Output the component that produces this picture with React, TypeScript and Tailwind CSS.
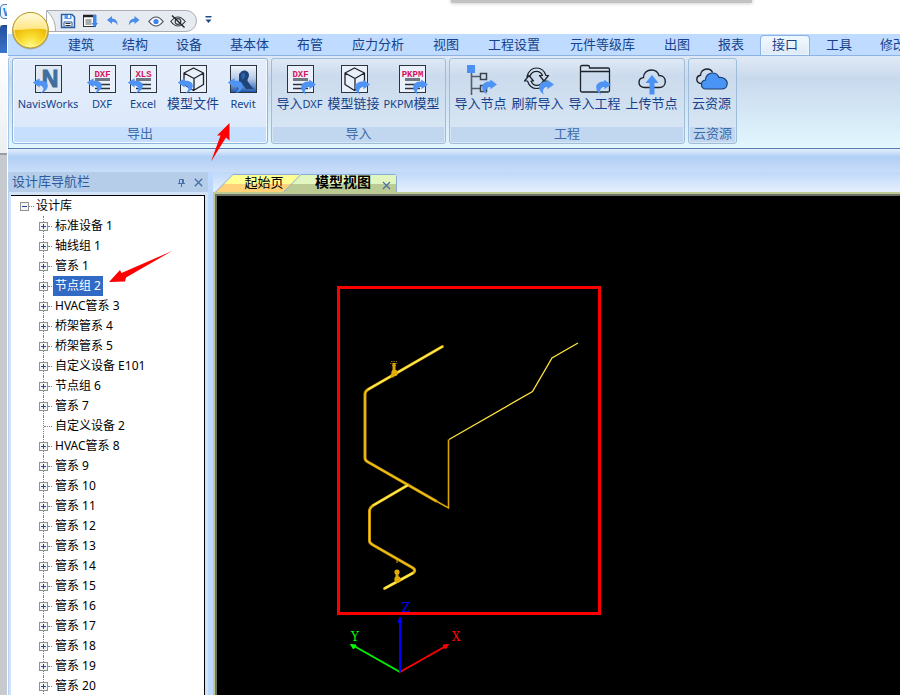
import { useState } from "react";
import type { ReactNode } from "react";
import clsx from "clsx";

type RibbonTab = { label: string; width: string };

const ribbonTabs: RibbonTab[] = [
  { label: "建筑", width: "w-[50px]" },
  { label: "结构", width: "w-[50px]" },
  { label: "设备", width: "w-[50px]" },
  { label: "基本体", width: "w-[63px]" },
  { label: "布管", width: "w-[50px]" },
  { label: "应力分析", width: "w-[78px]" },
  { label: "视图", width: "w-[50px]" },
  { label: "工程设置", width: "w-[78px]" },
  { label: "元件等级库", width: "w-[91px]" },
  { label: "出图", width: "w-[50px]" },
  { label: "报表", width: "w-[50px]" },
  { label: "接口", width: "w-[50px]" },
  { label: "工具", width: "w-[50px]" },
  { label: "修改", width: "w-[50px]" },
];

const treeItems = [
  "标准设备 1",
  "轴线组 1",
  "管系 1",
  "节点组 2",
  "HVAC管系 3",
  "桥架管系 4",
  "桥架管系 5",
  "自定义设备 E101",
  "节点组 6",
  "管系 7",
  "自定义设备 2",
  "HVAC管系 8",
  "管系 9",
  "管系 10",
  "管系 11",
  "管系 12",
  "管系 13",
  "管系 14",
  "管系 15",
  "管系 16",
  "管系 17",
  "管系 18",
  "管系 19",
  "管系 20",
];

const leafItems = ["自定义设备 2"];

/* ---------- ribbon icons ---------- */

function IconBox({ children }: { children: ReactNode }) {
  return (
    <svg viewBox="0 0 32 32" className="h-8 w-8 shrink-0" fill="none" aria-hidden="true">
      {children}
    </svg>
  );
}

function Frame({ fill = "#e9f0fa" }: { fill?: string }) {
  return <rect x="3.5" y="1.5" width="26" height="27" fill={fill} stroke="#2b333f" />;
}

function ExportArrow() {
  return (
    <path
      d="M0.8 18.6 7.6 14.2V16.8C12.6 16.6 15.8 18.4 15.8 21.6 15.8 25.4 12.4 28.4 8 29.6 10.8 27.4 11.8 25.6 11.2 23.8 10.8 22.4 9.6 21.6 7.6 21.4V23.6Z"
      fill="#4f94f5"
    />
  );
}

function ImportArrow() {
  return (
    <path
      d="M32 20.4 25.2 15.6V17.6C20.4 17.6 17.4 19.6 17.2 23 17 26 18.8 28.6 22 30.4 20.6 27.8 20.8 25.8 22 24.4 22.8 23.4 24 23 25.4 23V25.2Z"
      fill="#4f94f5"
    />
  );
}

function FileIcon({ name, incoming }: { name: string; incoming?: boolean }) {
  return (
    <IconBox>
      <Frame />
      <text
        x="16.5"
        y="12.5"
        textAnchor="middle"
        fill="#d8125c"
        fontSize="9"
        fontWeight="700"
        fontFamily="'Liberation Mono', monospace"
      >
        {name}
      </text>
      <path d="M9 15.5h15" stroke="#707783" strokeWidth="3" />
      <path d="M9 20.5h15M9 24.5h15" stroke="#2b333f" strokeWidth="1.4" />
      {incoming ? <ImportArrow /> : <ExportArrow />}
    </IconBox>
  );
}

function CubeIcon({ incoming }: { incoming?: boolean }) {
  return (
    <IconBox>
      <Frame />
      <path
        d="M16.5 4 26.5 9V20.5L16.5 26.5 7 20.5V9ZM7 9 17 14.5 26.5 9M17 14.5V26"
        stroke="#1d2229"
        strokeWidth="1.3"
        strokeLinejoin="round"
      />
      {incoming ? <ImportArrow /> : <ExportArrow />}
    </IconBox>
  );
}

function NavisIcon() {
  return (
    <IconBox>
      <Frame fill="#dfe9f4" />
      <text
        x="18"
        y="23"
        textAnchor="middle"
        fill="#3f6f9f"
        stroke="#3f6f9f"
        fontSize="23"
        fontWeight="700"
        fontFamily="'Liberation Sans', sans-serif"
      >
        N
      </text>
      <ExportArrow />
    </IconBox>
  );
}

function RevitIcon() {
  return (
    <IconBox>
      <defs>
        <linearGradient id="revit-bg" x1="0" y1="0" x2="0" y2="1">
          <stop offset="0" stopColor="#f3f7fc" />
          <stop offset="0.5" stopColor="#b4c9e8" />
          <stop offset="1" stopColor="#1d55ae" />
        </linearGradient>
      </defs>
      <Frame fill="url(#revit-bg)" />
      <path
        d="M12 10 15 7C18 5.5 22 7 22 11 22 14 20 15.500 20.500 17L24 22 27 25H19L16 21 14 25H10L12 20Z"
        fill="#1f4479"
      />
      <path d="M14 10.500 17 8.500 18.500 12 15.500 16Z" fill="#2f62a8" />
      <ExportArrow />
    </IconBox>
  );
}

function NodesIcon() {
  return (
    <IconBox>
      <path d="M6.5 9V31M6.5 12.5H15M6.5 24.5H15" stroke="#555d68" strokeWidth="1.6" />
      <rect x="15.5" y="9.5" width="6" height="6" stroke="#3a424d" strokeWidth="1.5" />
      <rect x="15.5" y="21.5" width="6" height="6" stroke="#3a424d" strokeWidth="1.5" />
      <rect x="2" y="1" width="8" height="8" fill="#4a90f5" />
      <ImportArrow />
    </IconBox>
  );
}

function RefreshIcon() {
  return (
    <IconBox>
      <g stroke="#1d2229" strokeWidth="1.2" strokeLinejoin="round">
        <path d="M5 12.500C6.500 7.500 10 4 14.500 4 19 4 22.500 7 24 11.500H26.500L22 17 17.500 11.500H20.500C19.500 9 17.500 7.300 14.500 7.300 11.500 7.300 9 9.500 8 12Z" />
        <path d="M24.500 17C23 21.500 19 24.500 14.500 24.500 10 24.500 7 21.500 5.500 17H2.500L7 11.500 11.500 17H9C10 19.500 12 21.300 14.500 21.300 17.500 21.300 20 19.500 21 17Z" />
      </g>
      <ImportArrow />
    </IconBox>
  );
}

function FolderIcon() {
  return (
    <IconBox>
      <path
        d="M1.5 26.5V3Q1.5 1.5 3 1.5H9Q10.5 1.5 10.5 3V4H29Q30.5 4 30.5 5.5V26.5Q30.5 28 29 28H3Q1.5 28 1.5 26.5ZM1.5 7.5H30.5"
        stroke="#1d2229"
        strokeWidth="1.3"
      />
      <ImportArrow />
    </IconBox>
  );
}

function UploadIcon() {
  return (
    <IconBox>
      <path
        d="M8.5 23.5C5 23.5 3 21.2 3 18.5 3 15.8 5 13.8 7.5 13.6 7.5 9 11 6 15.5 6 19.5 6 22 8.2 23 11.5 27 11.5 29.3 14.2 29.3 17.5 29.3 21 26.8 23.5 23.5 23.5Z"
        stroke="#1d2229"
        strokeWidth="1.4"
      />
      <path d="M16 11 22.5 19H18.5V30.5H13.5V19H9.5Z" fill="#4a90f5" />
    </IconBox>
  );
}

function CloudIcon() {
  return (
    <IconBox>
      <path
        d="M7 19.5C2.5 20 0.8 17.5 0.8 15.5 0.8 13 2.5 11.5 4.5 11.2 4.5 7.5 7.5 5 11 5 14 5 15.8 6.5 16.5 8.5"
        stroke="#1d2229"
        strokeWidth="1.4"
      />
      <path
        d="M10 25C7 25 5.5 23 5.5 20.5 5.5 18 7.2 16.3 9.5 16 9.5 12 12.5 9 16.5 9 19.8 9 22 10.8 23 13.5 28 13 31.2 16 31.2 19.5 31.2 22.8 28.8 25 26 25Z"
        fill="#4a94f5"
        stroke="#1c3f73"
        strokeWidth="1.2"
      />
    </IconBox>
  );
}

/* ---------- quick access ---------- */

const quickActions: { name: string; icon: ReactNode }[] = [
  {
    name: "保存",
    icon: (
      <>
        <path d="M1.5 1.5H12L14.5 4V14.5H1.5Z" fill="#eef5ff" stroke="#2d5fa8" strokeWidth="1.5" />
        <path d="M4.500 2h7v4h-7z" fill="#5a9af0" />
        <path d="M4 9h8v5H4z" fill="#fff" stroke="#2f5d9c" />
        <path d="M5.5 10.5h5M5.5 12.5h5" stroke="#333" />
        <rect x="8" y="2" width="2" height="3" fill="#fff" />
      </>
    ),
  },
  {
    name: "窗口",
    icon: (
      <>
        <rect x="1.5" y="2.5" width="12" height="11" fill="#fff" stroke="#333" />
        <path d="M1 3h13" stroke="#222" strokeWidth="2.5" />
        <path d="M3.5 7h6M3.5 9h6M3.5 11h6" stroke="#555" />
        <path d="M11 2h3.5v8H16l-3.2 4.5L9.5 10H11z" fill="#3f87ea" />
      </>
    ),
  },
  {
    name: "撤销",
    icon: <path d="M3 7 8 3V5.4C12 5.6 14 8.5 13.5 12.5 12.4 10 11 8.8 8 8.8V11Z" fill="#4a8cec" />,
  },
  {
    name: "重做",
    icon: <path d="M13.5 7 8.5 3V5.4C4.5 5.6 2.5 8.5 3 12.5 4.1 10 5.5 8.8 8.5 8.8V11Z" fill="#4a8cec" />,
  },
  {
    name: "显示",
    icon: (
      <>
        <path d="M0.8 8.5Q8 -0.5 15.2 8.5Q8 17.5 0.8 8.5Z" fill="#f5f8fc" stroke="#444b55" strokeWidth="1.2" />
        <circle cx="8" cy="8.5" r="2.6" fill="#3f83e8" />
      </>
    ),
  },
  {
    name: "隐藏",
    icon: (
      <>
        <path d="M0.8 8.5Q8 -0.5 15.2 8.5Q8 17.5 0.8 8.5Z" stroke="#333a44" strokeWidth="1.2" />
        <circle cx="8" cy="8.5" r="2.8" stroke="#333a44" strokeWidth="1.2" />
        <path d="M2 2.5 14.5 14.5" stroke="#222" strokeWidth="1.4" />
      </>
    ),
  },
];

function QuickAccess() {
  return (
    <div className="flex items-start pt-2.5 pl-[38px]">
      <div className="relative flex h-[22px] w-[151px] items-center gap-1.5 overflow-hidden rounded-r-full border border-[#a9adb3] bg-[#e6ebf1] pl-[13px]">
        <span className="absolute -top-[7px] -left-[43px] h-[52px] w-[52px] rounded-full border border-[#a9adb3] bg-white" />
        {quickActions.map((action) => (
          <button key={action.name} type="button" aria-label={action.name} className="relative h-4 w-4 shrink-0">
            <svg viewBox="0 0 16 16" className="h-4 w-4" fill="none">
              {action.icon}
            </svg>
          </button>
        ))}
      </div>
      <button type="button" aria-label="自定义快速访问工具栏" className="mt-1.5 ml-2">
        <svg viewBox="0 0 7 8" className="h-2 w-[7px]">
          <path d="M0.5 0h6v1.6h-6zM0.5 3.5h6L3.5 7z" fill="#1d4a88" />
        </svg>
      </button>
    </div>
  );
}

function AppOrb() {
  return (
    <button type="button" aria-label="应用程序菜单" className="absolute top-[11px] left-[3px] z-10 h-[39px] w-[39px]">
      <svg viewBox="0 0 39 39" className="h-full w-full">
        <defs>
          <linearGradient id="orb-top" x1="0" y1="0" x2="0" y2="1">
            <stop offset="0" stopColor="#fffbe0" />
            <stop offset="1" stopColor="#ffe47c" />
          </linearGradient>
          <radialGradient id="orb-bottom" cx="0.5" cy="0.95" r="0.6">
            <stop offset="0" stopColor="#fff88a" />
            <stop offset="0.5" stopColor="#f9dc2e" />
            <stop offset="1" stopColor="#ecb708" />
          </radialGradient>
        </defs>
        <circle cx="19.5" cy="20" r="18.5" fill="#8f8a72" opacity="0.55" />
        <circle cx="19.5" cy="19.2" r="17.8" fill="url(#orb-bottom)" stroke="#b89a2c" />
        <path d="M2.4 19a17.1 17.1 0 0 1 34.2 0Q28 17 19.5 18 11 19 2.4 19Z" fill="url(#orb-top)" />
        <circle cx="19.5" cy="19.2" r="16.4" fill="none" stroke="#fff5b0" opacity="0.7" />
      </svg>
    </button>
  );
}

/* ---------- ribbon ---------- */

// Latin runs are set smaller than the Chinese ones beside them.
function MixedLabel({ text }: { text: string }) {
  return (
    <span className="text-[13px] leading-[14px] whitespace-nowrap">
      {text.split(/([A-Za-z]+)/).map((part, i) =>
        /^[A-Za-z]+$/.test(part) ? (
          <span key={i} className="text-[11px]">
            {part}
          </span>
        ) : (
          part
        ),
      )}
    </span>
  );
}

type RibbonButtonProps = { label: string; width: string; icon: ReactNode };

function RibbonButton({ label, width, icon }: RibbonButtonProps) {
  return (
    <button type="button" className={clsx("flex shrink-0 flex-col items-center", width)}>
      {icon}
      <MixedLabel text={label} />
    </button>
  );
}

type RibbonGroupProps = { title: string; width: string; active?: boolean; children: ReactNode };

function RibbonGroup({ title, width, active, children }: RibbonGroupProps) {
  return (
    <section
      className={clsx(
        "flex h-[86px] shrink-0 flex-col rounded-[3px] border",
        width,
        active
          ? "border-[#8db5dc] bg-linear-to-b from-[#e4edfb] to-[#dbe9fb] shadow-[inset_0_0_0_1px_#f4faff]"
          : "border-[#9dbdd9] bg-linear-to-b from-[#dfe9f5] via-[#cbdbed] via-20% to-[#dae8f5]",
      )}
    >
      <div className="flex flex-1 justify-center pt-[5px] pr-0.5">{children}</div>
      <h2
        className={clsx(
          "m-px h-[15px] text-center text-[13px] leading-[13px] whitespace-nowrap text-[#3e6aaa]",
          active ? "bg-[#c6dfff]" : "bg-[#c0d7ef]",
        )}
      >
        {title}
      </h2>
    </section>
  );
}

function Ribbon() {
  return (
    <div className="flex h-[92px] gap-[3px] overflow-hidden rounded-tl border-l border-[#a8c6e8] bg-linear-to-b from-[#e0e9f5] via-[#c8d9ed] via-25% to-[#e2f7ff] pt-[2px] pl-[3px]">
      <RibbonGroup title="导出" width="w-[256px]" active>
        <RibbonButton label="NavisWorks" width="w-[66px]" icon={<NavisIcon />} />
        <RibbonButton label="DXF" width="w-[42px]" icon={<FileIcon name="DXF" />} />
        <RibbonButton label="Excel" width="w-[40px]" icon={<FileIcon name="XLS" />} />
        <RibbonButton label="模型文件" width="w-[60px]" icon={<CubeIcon />} />
        <RibbonButton label="Revit" width="w-[40px]" icon={<RevitIcon />} />
      </RibbonGroup>
      <RibbonGroup title="导入" width="w-[175px]">
        <RibbonButton label="导入DXF" width="w-[54px]" icon={<FileIcon name="DXF" incoming />} />
        <RibbonButton label="模型链接" width="w-[54px]" icon={<CubeIcon incoming />} />
        <RibbonButton label="PKPM模型" width="w-[62px]" icon={<FileIcon name="PKPM" incoming />} />
      </RibbonGroup>
      <RibbonGroup title="工程" width="w-[236px]">
        <RibbonButton label="导入节点" width="w-[57px]" icon={<NodesIcon />} />
        <RibbonButton label="刷新导入" width="w-[57px]" icon={<RefreshIcon />} />
        <RibbonButton label="导入工程" width="w-[57px]" icon={<FolderIcon />} />
        <RibbonButton label="上传节点" width="w-[57px]" icon={<UploadIcon />} />
      </RibbonGroup>
      <RibbonGroup title="云资源" width="w-[49px]">
        <RibbonButton label="云资源" width="w-[45px]" icon={<CloudIcon />} />
      </RibbonGroup>
    </div>
  );
}

/* ---------- navigator ---------- */

function Expander({ open }: { open?: boolean }) {
  return (
    <svg viewBox="0 0 9 9" className="relative h-[9px] w-[9px] shrink-0">
      <rect x="0.5" y="0.5" width="8" height="8" fill="#f4f4f4" stroke="#919191" />
      <path d={open ? "M2 4.5h5" : "M2 4.5h5M4.5 2v5"} stroke="#27459c" />
    </svg>
  );
}

function DesignTree() {
  const [selected, setSelected] = useState("节点组 2");

  return (
    <div className="min-h-0 flex-1 overflow-hidden border-t border-r border-black bg-white pl-[9px] text-[12px] leading-5 text-black">
      <div className="flex items-center">
        <Expander open />
        <span className="w-[5px] border-t border-dotted border-[#808080]" />
        <span className="pl-0.5">设计库</span>
      </div>
      <ul>
        {treeItems.map((item) => (
          <li key={item} className="flex h-5 items-center pl-[19px]">
            <span className="relative flex h-5 w-[9px] items-center">
              <span className="absolute inset-y-0 left-1 border-l border-dotted border-[#808080]" />
              {!leafItems.includes(item) && <Expander />}
            </span>
            <span
              className={clsx(
                "border-t border-dotted border-[#808080]",
                leafItems.includes(item) ? "-ml-1 w-2" : "w-1",
              )}
            />
            <button
              type="button"
              onClick={() => setSelected(item)}
              className={clsx(
                "ml-px h-5 px-0.5 whitespace-nowrap",
                item === selected && "bg-[#316ac5] text-white",
              )}
            >
              {item}
            </button>
          </li>
        ))}
      </ul>
    </div>
  );
}

function Navigator() {
  return (
    <aside className="flex w-[200px] shrink-0 flex-col border-l border-[#b5d2f5] bg-[#d3e3f7]">
      <header className="flex h-5 items-center bg-[#b5cde8] pr-[5px] pl-[3px] text-[#2c5aa0]">
        <h2 className="h-5 flex-1 text-[13px] leading-[18px]">设计库导航栏</h2>
        <button type="button" aria-label="固定" className="mr-2">
          <svg viewBox="0 0 9 9" className="h-[9px] w-[9px]" fill="none" stroke="#4a70a8">
            <path d="M2.5 5.5V1.5h4v4M1 5.5h7M4.5 6v3M5.5 1.5v4" />
          </svg>
        </button>
        <button type="button" aria-label="关闭面板">
          <svg viewBox="0 0 9 9" className="h-[9px] w-[9px]" fill="none" stroke="#4a70a8" strokeWidth="1.4">
            <path d="M0.8 0.8 8.2 8.2M8.2 0.8 0.8 8.2" />
          </svg>
        </button>
      </header>
      <div className="flex min-h-0 flex-1 flex-col pt-[3px] pr-[3px] pl-[2px]">
        <DesignTree />
      </div>
    </aside>
  );
}

/* ---------- model view ---------- */

function DocumentTabs() {
  return (
    <div className="flex h-5 items-end bg-linear-to-b from-[#bfd8fa] to-[#e6f0fd] pl-0.5">
      <button
        type="button"
        className="h-[18px] w-[84px] bg-[#8cabd0] pt-px [clip-path:polygon(0_100%,18px_0,100%_0,100%_100%)]"
      >
        <span className="block h-[17px] bg-linear-to-b from-[#ffff94] from-50% to-[#ffd27a] to-55% pl-[14px] text-[13px] leading-[14px] text-black [clip-path:polygon(1px_100%,18px_0,100%_0,100%_100%)]">
          起始页
        </span>
      </button>
      <div className="-ml-4 h-[18px] w-[114px] bg-[#8cabd0] pt-px pr-px [clip-path:polygon(0_100%,18px_0,112px_0,100%_2px,100%_100%)]">
        <div className="flex h-[17px] items-start bg-linear-to-b from-[#e2f6c0] from-50% to-[#bccb93] to-55% pl-8 [clip-path:polygon(1px_100%,18px_0,100%_0,100%_100%)]">
          <button type="button" className="text-[14px] leading-[13px] font-bold text-black">
            模型视图
          </button>
          <button type="button" aria-label="关闭视图" className="mt-1.5 ml-[11px]">
            <svg viewBox="0 0 9 9" className="h-[9px] w-[9px]" fill="none" stroke="#4a70a8" strokeWidth="1.3">
              <path d="M1 1 8 8M8 1 1 8" />
            </svg>
          </button>
        </div>
      </div>
    </div>
  );
}

const pipes = [
  "M442.5 346.5 368 389.5Q365 391.5 365 394V458Q365 460.5 368 462L436 501",
  "M408 485 373 505.5Q369.5 508 369.5 511V541Q369.5 543 373 545L413 568Q416.5 570.5 413 573L384.5 588.5",
];

function ModelScene() {
  return (
    <svg viewBox="217 196 684 500" className="absolute top-0 left-0 h-[500px] w-[684px] max-w-none" fill="none">
      {pipes.map((d) => (
        <g key={d}>
          <path d={d} stroke="#c99700" strokeWidth="3" strokeLinecap="round" />
          <path d={d} stroke="#f5c81e" strokeWidth="1.2" strokeLinecap="round" />
        </g>
      ))}
      <path d="M442.5 346.5 368 389.5M408 485 373 505.5M413 573 384.5 588.5" stroke="#ffe94a" strokeWidth="2" />
      <path d="M436 501 448.5 508V439.5" stroke="#d9a404" strokeWidth="1.6" />
      <path d="M449 439.5 532.5 391.5 552 358 578 343" stroke="#ffe53d" strokeWidth="1.3" />
      {/* valves */}
      <g stroke="#d9a404">
        <path d="M391 361.5h6M390 363.5h8M392 365.5h4" strokeDasharray="1.5 1" opacity="0.7" />
        <path d="M394 363v12" strokeWidth="3" />
        <path d="M397 559.5v3.5" />
        <path d="M397 571v10" strokeWidth="3" />
      </g>
      <g fill="#e3ab05">
        <circle cx="394.5" cy="373" r="3.2" />
        <circle cx="392.500" cy="375.500" r="2" />
        <circle cx="397" cy="572" r="2.6" />
        <circle cx="397.500" cy="579.500" r="3.2" />
      </g>
      {/* axis triad */}
      <g strokeWidth="2">
        <path d="M400 672 354 646" stroke="#00f000" />
        <path d="M400 672 446 646" stroke="#f00" />
        <path d="M400 672V620" stroke="#00f" />
      </g>
      <path d="M350.500 644.500 356 645 353.500 649Z" fill="#0f0" stroke="#0f0" />
      <path d="M448.500 644.500 443 645 445.500 649Z" fill="#f00" stroke="#f00" />
      <path d="M400 617 402 622.500H398Z" fill="#00f" stroke="#00f" />
      <g fontFamily="'DejaVu Serif', serif" fontSize="12" textAnchor="middle">
        <text x="355" y="641" fill="#0f0">
          Y
        </text>
        <text x="456" y="641" fill="#f00">
          X
        </text>
        <text x="406" y="612" fill="#00f">
          Z
        </text>
      </g>
      <rect x="338.5" y="287.5" width="261" height="326" stroke="#f00" strokeWidth="3" />
    </svg>
  );
}

function ModelView() {
  return (
    <main className="ml-[5px] flex min-w-0 flex-1 flex-col">
      <DocumentTabs />
      <div className="flex min-h-0 flex-1 flex-col border-t-2 border-l-2 border-[#bccb93]">
        <div className="relative min-h-0 flex-1 overflow-hidden border-t-2 border-l-2 border-[#6f7068] bg-black">
          <ModelScene />
        </div>
      </div>
    </main>
  );
}

// Sliver of the document window that lies behind the application.
function BackgroundWindow() {
  return (
    <div className="flex w-[7px] shrink-0 flex-col overflow-hidden bg-[#c6c9ce]">
      <div className="h-[25px] bg-white pt-1">
        <div className="h-[15px] w-4 rounded-l border border-[#4b80b8] bg-[#e9f4ff] pl-0.5 text-[11px] leading-[13px] font-bold text-[#1c86d8]">
          W
        </div>
      </div>
      <div className="h-7 rounded-tl border-t border-[#1c3f86] bg-linear-to-b from-[#24509f] to-[#3c74cc]" />
      <div className="h-[102px] border-b-2 border-[#9a9da3] bg-linear-to-b from-white to-[#eceef1]" />
    </div>
  );
}

function Callouts() {
  return (
    <svg viewBox="0 0 300 300" className="pointer-events-none absolute top-0 left-0 h-[300px] w-[300px]" fill="#ff0000">
      <path d="M229.5 123 217 135.5 220.5 135.5 211 161.5 226 137.5 229.5 140.5Z" />
      <path d="M109 282 120 270 121.5 273 172 251 126 277.5 125 281.5Z" />
    </svg>
  );
}

export default function App() {
  const [activeTab, setActiveTab] = useState("接口");

  return (
    <div className="relative flex h-screen overflow-hidden bg-white font-['Noto_Sans','Noto_Sans_CJK_SC',sans-serif] text-[#15428b]">
      <BackgroundWindow />
      <div className="relative ml-px flex min-w-0 flex-1 flex-col">
        <span className="absolute -top-1 left-[443px] h-[7px] w-[301px] bg-[#c2c2c2] shadow-[0_0_4px_#bbb]" />
        <AppOrb />
        <div className="h-[34px] shrink-0">
          <QuickAccess />
        </div>
        <nav className="flex h-[22px] shrink-0 items-end gap-1 overflow-hidden border-b border-[#8db2e3] bg-[#bfdbff] pl-12">
          {ribbonTabs.map((tab) => (
            <button
              key={tab.label}
              type="button"
              onClick={() => setActiveTab(tab.label)}
              className={clsx(
                "flex h-5 shrink-0 items-start justify-center rounded-t border border-b-0 text-[13px] leading-4 whitespace-nowrap",
                tab.width,
                tab.label === activeTab
                  ? "border-[#8db2e3] bg-linear-to-b from-[#f4fafe] to-[#dde8f5] shadow-[inset_0_0_2px_1px_#e3f8ff]"
                  : "border-transparent",
              )}
            >
              {tab.label}
            </button>
          ))}
        </nav>
        <Ribbon />
        <div className="h-6 shrink-0 border-t border-[#567db1] bg-linear-to-b from-[#e3eefd] via-[#b1cff5] via-35% to-[#c9ddf9]" />
        <div className="flex min-h-0 flex-1 bg-[#bcd8fc]">
          <Navigator />
          <ModelView />
        </div>
      </div>
      <Callouts />
    </div>
  );
}
